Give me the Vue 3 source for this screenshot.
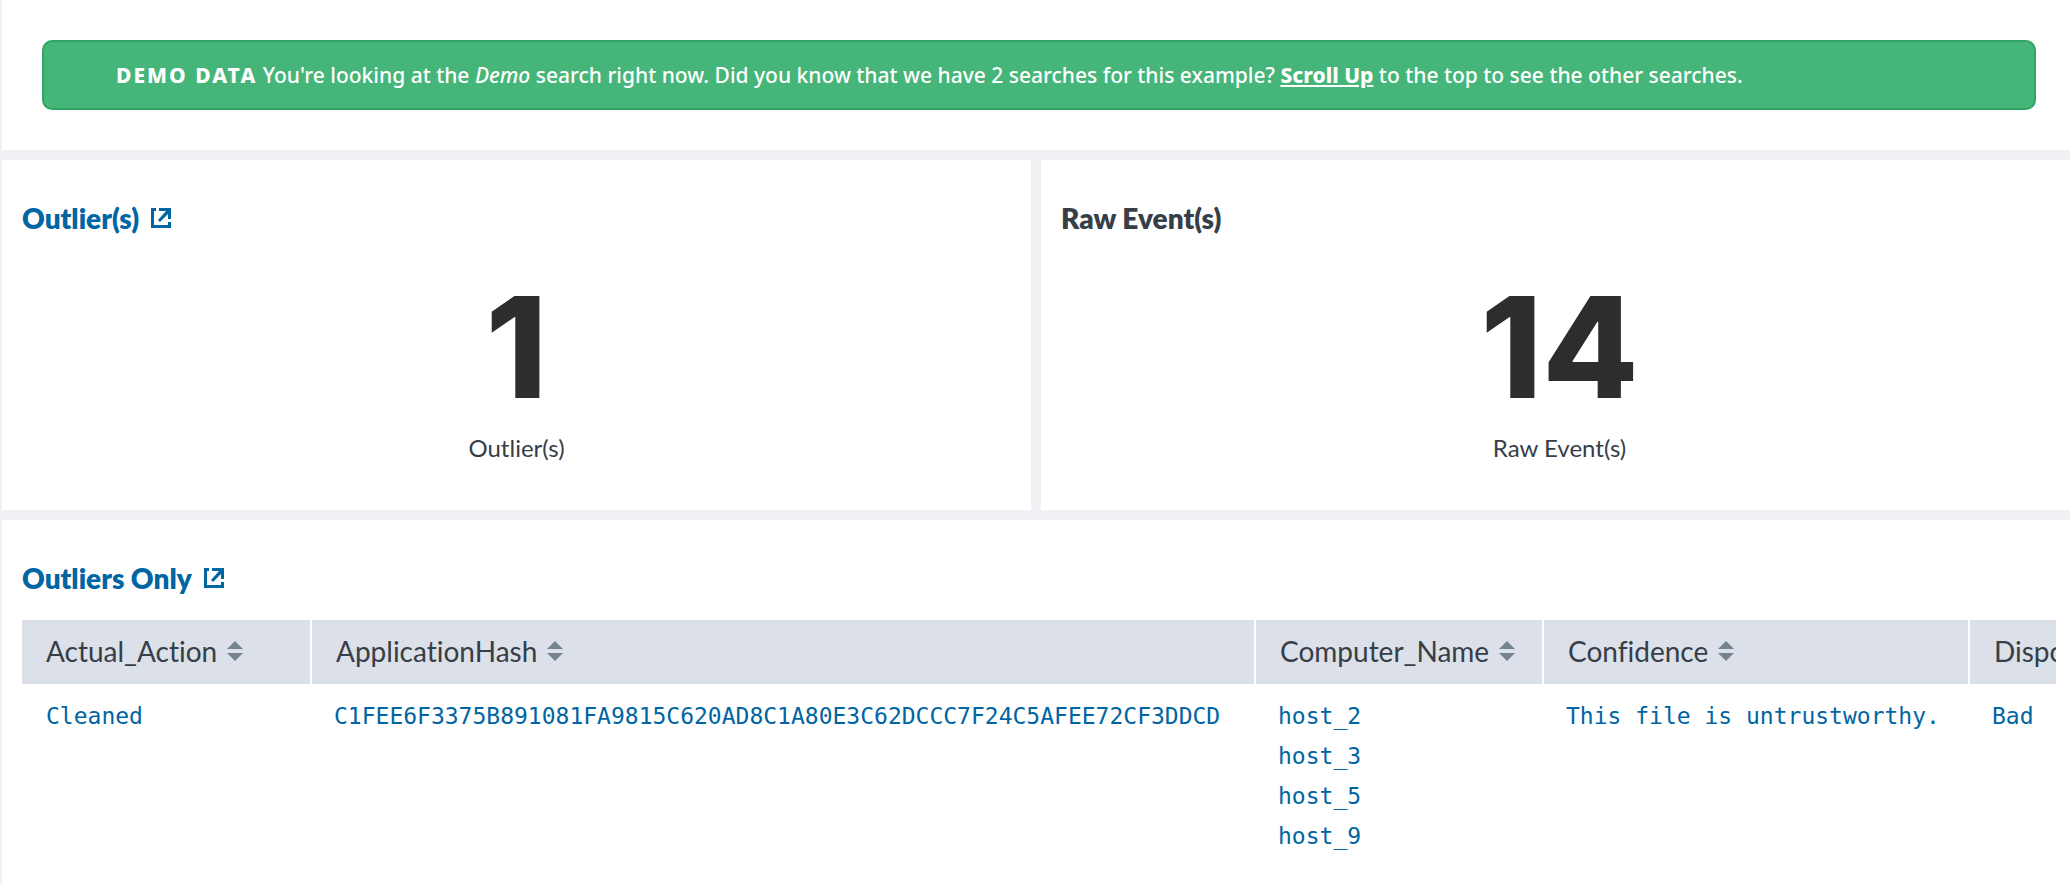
<script setup>
const metrics = [
  { title: 'Outlier(s)', link: true, value: '1', label: 'Outlier(s)' },
  { title: 'Raw Event(s)', link: false, value: '14', label: 'Raw Event(s)' },
]
const columns = [
  { name: 'Actual_Action', cls: 'action', values: ['Cleaned'] },
  { name: 'ApplicationHash', cls: 'hash', values: ['C1FEE6F3375B891081FA9815C620AD8C1A80E3C62DCCC7F24C5AFEE72CF3DDCD'] },
  { name: 'Computer_Name', cls: 'computer', values: ['host_2', 'host_3', 'host_5', 'host_9'] },
  { name: 'Confidence', cls: 'confidence', values: ['This file is untrustworthy.'] },
  { name: 'Disposition', cls: 'disposition', values: ['Bad'] },
]
</script>

<template>
  <main class="dashboard">
    <section class="notice-panel">
      <p class="notice">
        <strong class="tag">DEMO DATA</strong> You're looking at the <em>Demo</em> search right now. Did you know that we have 2 searches for this example? <a href="#top">Scroll Up</a> to the top to see the other searches.
      </p>
    </section>

    <div class="metrics">
      <section v-for="m in metrics" :key="m.title" class="metric">
        <h2 class="title">
          <a v-if="m.link" href="#outliers">{{ m.title }}
            <svg class="open" viewBox="0 0 20 20" aria-hidden="true">
              <path d="M0 0H5V3H3V17H17V14H20V20H0ZM8 0H20V11H17V6L9 14L7 12L15 3H8Z" />
            </svg>
          </a>
          <template v-else>{{ m.title }}</template>
        </h2>
        <div class="value">{{ m.value }}</div>
        <div class="label">{{ m.label }}</div>
      </section>
    </div>

    <section id="outliers" class="results">
      <h2 class="title">
        <a href="#outliers">Outliers Only
          <svg class="open" viewBox="0 0 20 20" aria-hidden="true">
            <path d="M0 0H5V3H3V17H17V14H20V20H0ZM8 0H20V11H17V6L9 14L7 12L15 3H8Z" />
          </svg>
        </a>
      </h2>
      <div class="scroller">
        <table>
          <thead>
            <tr>
              <th v-for="c in columns" :key="c.name" :class="c.cls" scope="col">
                <button type="button">{{ c.name }}
                  <svg class="sort" viewBox="0 0 16 20" aria-hidden="true">
                    <path d="M8 0L16 8H0ZM0 12H16L8 20Z" />
                  </svg>
                </button>
              </th>
            </tr>
          </thead>
          <tbody>
            <tr>
              <td v-for="c in columns" :key="c.name">
                <a v-for="v in c.values" :key="v" href="#outliers">{{ v }}</a>
              </td>
            </tr>
          </tbody>
        </table>
      </div>
    </section>
  </main>
</template>

<style>
body {
  margin: 0;
  background: #fff;
}
</style>

<style scoped>
.dashboard {
  display: flex;
  flex-direction: column;
  gap: 10px;
  min-height: 100vh;
  padding-left: 2px;
  box-sizing: border-box;
  overflow: hidden;
  background: #f0f1f4;
  color: #363e48;
  font-family: Lato, "Open Sans", sans-serif;
  font-variant-ligatures: none;
}
.notice-panel {
  padding: 40px 34px 40px 40px;
  background: #fff;
}
.notice {
  margin: 0;
  padding: 15px 72px;
  border: 2px solid #2fa465;
  border-radius: 10px;
  background: #45b579;
  color: #fff;
  font: 500 21px/36px "Noto Sans", "Open Sans", sans-serif;
}
.tag {
  font-weight: 800;
  letter-spacing: 2px;
}
.notice a {
  color: #fff;
  font-weight: 800;
  text-decoration: underline;
}
.metrics {
  display: grid;
  grid-template-columns: 1fr 1fr;
  gap: 10px;
}
.metric {
  padding: 40px 20px 46px;
  background: #fff;
}
/* The last panel bleeds past the right edge of the window. */
.metric:last-child {
  margin-right: -8px;
}
.title {
  margin: 0;
  font-size: 28px;
  line-height: 36px;
  font-weight: 800;
}
.title a {
  display: inline-flex;
  align-items: center;
  gap: 12px;
  color: #0065a3;
  text-decoration: none;
}
.open {
  width: 20px;
  height: 20px;
  fill: currentColor;
}
.value {
  margin-top: 41px;
  color: #2d2d2d;
  font: 800 140px/140px Inter, sans-serif;
  text-align: center;
}
.label {
  margin-top: 15px;
  font-size: 24px;
  line-height: 32px;
  text-align: center;
}
.results {
  flex: 1;
  padding: 40px 14px 0 20px;
  background: #fff;
}
.scroller {
  margin-top: 24px;
  overflow: hidden;
}
table {
  width: 2200px;
  table-layout: fixed;
  border-collapse: separate;
  border-spacing: 0;
}
th {
  padding: 0;
  border-right: 2px solid #fff;
  background: #dce0e8;
  text-align: left;
}
.action { width: 288px; }
.hash { width: 942px; }
.computer { width: 286px; }
.confidence { width: 424px; }
button {
  display: flex;
  align-items: center;
  gap: 10px;
  width: 100%;
  height: 64px;
  padding: 0 24px 2px;
  border: 0;
  background: none;
  color: #363e48;
  font: 28px/36px Lato, sans-serif;
  font-variant-ligatures: none;
}
.sort {
  width: 16px;
  height: 20px;
  fill: #748390;
}
td {
  padding: 12px 22px;
  vertical-align: top;
}
td:first-child {
  padding-left: 24px;
}
td a {
  display: block;
  color: #0065a3;
  font: 23px/40px "DejaVu Sans Mono", monospace;
  text-decoration: none;
  white-space: nowrap;
}
</style>
